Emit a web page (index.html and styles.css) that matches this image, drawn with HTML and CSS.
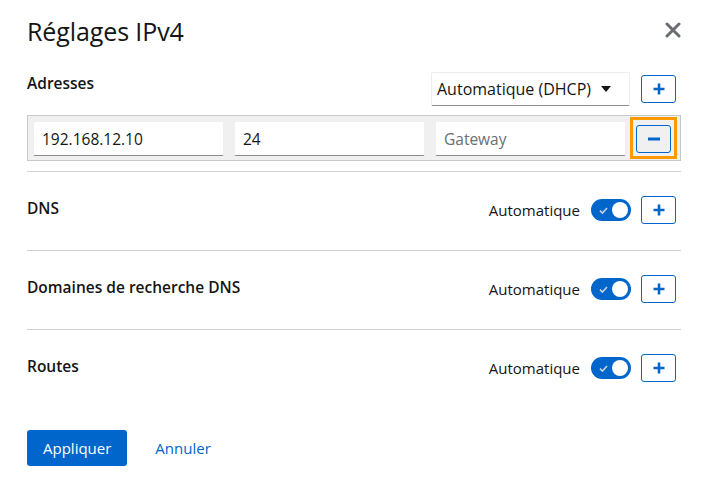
FILE: index.html
```html
<!DOCTYPE html>
<html lang="fr">
<head>
<meta charset="utf-8">
<title>Réglages IPv4</title>
<link rel="stylesheet" href="styles.css">
</head>
<body>
<div class="modal">
  <header class="modal-head">
    <h1 class="title">Réglages IPv4</h1>
    <button class="close" aria-label="Fermer">
      <svg viewBox="0 0 16 16" width="16" height="16"><path d="M2 2L14 14M14 2L2 14" stroke="#6a6e73" stroke-width="3" stroke-linecap="round"/></svg>
    </button>
  </header>

  <section class="addr">
    <div class="addr-head">
      <h2 class="label">Adresses</h2>
      <div class="ctrls ctrls--wide">
        <div class="select"><span>Automatique (DHCP)</span><span class="caret"></span></div>
        <button class="btn-icon" aria-label="Ajouter">
          <svg viewBox="0 0 12 12" width="12" height="12"><path d="M6 0.5V11.5M0.5 6H11.5" stroke="#06c" stroke-width="2.6"/></svg>
        </button>
      </div>
    </div>
    <div class="addr-box">
      <input class="field" value="192.168.12.10">
      <input class="field" value="24">
      <input class="field" placeholder="Gateway">
      <button class="btn-icon btn-icon--grey focused" aria-label="Supprimer">
        <svg viewBox="0 0 12 4" width="12" height="4"><path d="M0 2H12" stroke="#06c" stroke-width="3"/></svg>
      </button>
    </div>
  </section>

  <div class="sep"></div>

  <section class="row">
    <h2 class="label">DNS</h2>
    <div class="ctrls">
      <span class="auto">Automatique</span>
      <span class="switch"><svg class="check" viewBox="0 0 10 8" width="9" height="7"><path d="M1 4.2L3.8 7L9 1.2" fill="none" stroke="#c9d3df" stroke-width="1.8"/></svg><span class="knob"></span></span>
      <button class="btn-icon" aria-label="Ajouter">
        <svg viewBox="0 0 12 12" width="12" height="12"><path d="M6 0.5V11.5M0.5 6H11.5" stroke="#06c" stroke-width="2.6"/></svg>
      </button>
    </div>
  </section>

  <div class="sep"></div>

  <section class="row">
    <h2 class="label">Domaines de recherche DNS</h2>
    <div class="ctrls">
      <span class="auto">Automatique</span>
      <span class="switch"><svg class="check" viewBox="0 0 10 8" width="9" height="7"><path d="M1 4.2L3.8 7L9 1.2" fill="none" stroke="#c9d3df" stroke-width="1.8"/></svg><span class="knob"></span></span>
      <button class="btn-icon" aria-label="Ajouter">
        <svg viewBox="0 0 12 12" width="12" height="12"><path d="M6 0.5V11.5M0.5 6H11.5" stroke="#06c" stroke-width="2.6"/></svg>
      </button>
    </div>
  </section>

  <div class="sep"></div>

  <section class="row">
    <h2 class="label">Routes</h2>
    <div class="ctrls">
      <span class="auto">Automatique</span>
      <span class="switch"><svg class="check" viewBox="0 0 10 8" width="9" height="7"><path d="M1 4.2L3.8 7L9 1.2" fill="none" stroke="#c9d3df" stroke-width="1.8"/></svg><span class="knob"></span></span>
      <button class="btn-icon" aria-label="Ajouter">
        <svg viewBox="0 0 12 12" width="12" height="12"><path d="M6 0.5V11.5M0.5 6H11.5" stroke="#06c" stroke-width="2.6"/></svg>
      </button>
    </div>
  </section>

  <footer class="footer">
    <button class="btn-primary">Appliquer</button>
    <button class="btn-link">Annuler</button>
  </footer>
</div>
</body>
</html>
```

FILE: styles.css
```css
* { box-sizing: border-box; }

body {
  margin: 0;
  background: #fff;
  color: #151515;
  font-family: "Open Sans", "Noto Sans", sans-serif;
  font-size: 16px;
}

button, input { font: inherit; color: inherit; }

.modal {
  width: 710px;
  height: 494px;
  padding: 0 29px 0 27px;
}

.modal-head {
  display: flex;
  justify-content: space-between;
  align-items: flex-start;
  padding-top: 15px;
}

.title {
  margin: 0;
  font-size: 25px;
  font-weight: 400;
  line-height: 32px;
  letter-spacing: -0.1px;
}

.close {
  margin-top: 7px;
  padding: 0;
  border: 0;
  background: none;
  width: 16px;
  height: 16px;
  display: flex;
}

.addr { margin-top: 25px; }

.addr-head {
  display: flex;
  justify-content: space-between;
  align-items: flex-start;
}

.label {
  margin: 0;
  font-size: 15.5px;
  font-weight: 600;
  line-height: 22px;
}

.row .label { margin-bottom: 4px; }

.ctrls {
  display: flex;
  align-items: center;
  gap: 10px;
  padding-right: 5px;
}

.ctrls--wide { gap: 11px; }

.select {
  width: 199px;
  height: 34px;
  display: flex;
  align-items: center;
  justify-content: space-between;
  padding: 0 18px 0 5px;
  border: 1px solid #ededed;
  border-bottom-color: #8a8d90;
  border-radius: 2px;
  background: #fff;
  font-size: 16px;
}

.caret {
  width: 0;
  height: 0;
  border-left: 5px solid transparent;
  border-right: 5px solid transparent;
  border-top: 6px solid #151515;
}

.btn-icon {
  width: 35px;
  height: 28px;
  padding: 0;
  display: flex;
  align-items: center;
  justify-content: center;
  border: 1px solid #06c;
  border-radius: 3px;
  background: #fff;
  flex: none;
}

.btn-icon--grey { background: #f0f0f0; }

.focused { position: relative; }
.focused::after {
  content: "";
  position: absolute;
  top: -9px;
  left: -7px;
  right: -7px;
  bottom: -7px;
  border: 3px solid #f90;
}

.addr-box {
  margin-top: 9px;
  display: flex;
  align-items: center;
  gap: 10px;
  padding: 5px 9px 4px 5px;
  background: #f0f0f0;
  border: 1px solid #c8c8c8;
}

.field {
  flex: 1;
  min-width: 0;
  height: 35px;
  padding: 0 8px;
  border: 1px solid #f0f0f0;
  border-bottom-color: #8a8d90;
  border-radius: 2px;
  background: #fff;
  font-size: 15.5px;
  color: #151515;
  outline: none;
}

.field::placeholder { color: #6a6e73; }

.sep {
  height: 1px;
  background: #d2d2d2;
  margin-top: 10px;
}

.row + .sep { margin-top: 0; }

.row {
  display: flex;
  justify-content: space-between;
  align-items: center;
  padding: 24px 0 26px 0;
}

.auto {
  font-size: 15px;
  line-height: 22px;
  margin-right: 1px;
}

.switch {
  width: 40px;
  height: 22px;
  border-radius: 11px;
  background: #06c;
  display: flex;
  align-items: center;
  justify-content: space-between;
  padding: 0 3px 0 8px;
}

.knob {
  width: 16px;
  height: 16px;
  border-radius: 50%;
  background: #fff;
}

.footer {
  margin-top: 22px;
  display: flex;
  gap: 12px;
}

.btn-primary {
  height: 36px;
  padding: 0 16px;
  border: 0;
  border-radius: 3px;
  background: #06c;
  color: #fff;
  font-size: 15px;
}

.btn-link {
  height: 36px;
  padding: 0 16px;
  border: 0;
  background: none;
  color: #06c;
  font-size: 15px;
}
```
